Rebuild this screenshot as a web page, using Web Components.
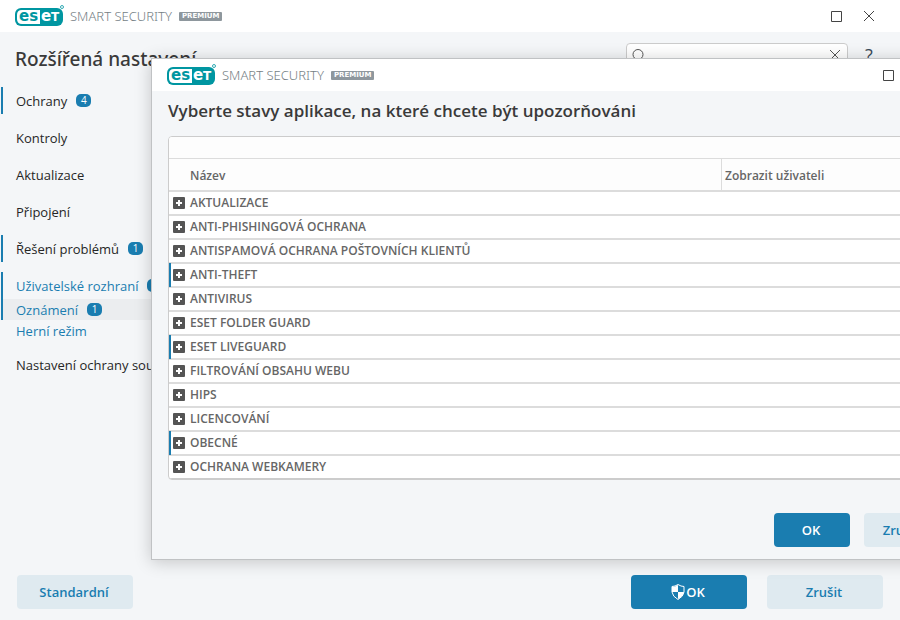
<!DOCTYPE html>
<html lang="cs">
<head>
<meta charset="utf-8">
<title>ESET Smart Security Premium</title>
<style>
    * {
        box-sizing: border-box;
    }
    html {
        --blue: #1a7db0;
        --panel: #f4f6f8;
        --text: #262626;
    }
    body {
        margin: 0;
        min-height: 100vh;
        overflow: hidden;
        background: var(--panel);
        color: var(--text);
        font: 500 13px/20px "Open Sans", "Noto Sans", sans-serif;
    }
</style>
</head>
<body>
<settings-app></settings-app>

<script>
const makeTemplate = (html) => {
    const template = document.createElement('template');
    template.innerHTML = html;
    return template;
};

class BaseElement extends HTMLElement {
    constructor() {
        super();
        this.attachShadow({ mode: 'open' });
        this.shadowRoot.appendChild(this.constructor.template.content.cloneNode(true));
    }
}

class ProductLogo extends BaseElement {
    static template = makeTemplate(`
<style>
    :host {
        display: flex;
        align-items: center;
        color: #747e84;
    }
    svg {
        display: block;
        width: 50px;
        height: 22px;
    }
    .name {
        margin-left: 5px;
        font: 300 13px/20px "Noto Sans", sans-serif;
    }
    .edition {
        margin: 1px 0 0 7px;
        padding: 0 3px;
        border-radius: 1px;
        background: #8e979d;
        color: white;
        font: bold 7px/9px "DejaVu Sans", sans-serif;
    }
</style>
<svg viewBox="0 0 50 22">
    <rect x="0" y="3" width="48" height="18" rx="6" fill="#0096a1"/>
    <path d="M7 5H25V19H7Q2 19 2 14V10Q2 5 7 5Z" fill="white"/>
    <g font-family="DejaVu Sans, sans-serif" font-weight="bold" font-size="15">
        <text x="4" y="16" fill="#0096a1">es</text>
        <text x="26" y="16" fill="white">e</text>
        <text x="36" y="16" fill="white" font-size="12">T</text>
    </g>
    <circle cx="47" cy="2" r="1.5" fill="none" stroke="#0096a1" stroke-width=".8"/>
</svg>
<span class="name">SMART SECURITY</span>
<span class="edition">PREMIUM</span>
`);
}

class TitleBar extends BaseElement {
    static template = makeTemplate(`
<style>
    :host {
        display: flex;
        align-items: center;
        justify-content: space-between;
        height: 32px;
        padding: 0 15px;
        background: white;
    }
    .buttons {
        display: flex;
    }
    button {
        display: grid;
        place-items: center;
        width: 32px;
        height: 32px;
        padding: 0;
        border: 0;
        background: none;
    }
    svg {
        width: 12px;
        height: 12px;
        fill: none;
        stroke: #444;
    }
</style>
<product-logo></product-logo>
<div class="buttons">
    <button aria-label="Maximalizovat"><svg viewBox="0 0 12 12"><path d="M.5 1.5H10.5V11.5H.5Z"/></svg></button>
    <button aria-label="Zavřít"><svg viewBox="0 0 12 12"><path d="M1 1L11 11M11 1L1 11"/></svg></button>
</div>
`);
}

class CountBadge extends BaseElement {
    static template = makeTemplate(`
<style>
    :host {
        display: block;
        width: 15px;
        border-radius: 5px;
        background: var(--blue);
        color: white;
        font-size: 10px;
        line-height: 13px;
        text-align: center;
    }
</style>
<slot></slot>
`);
}

class NavItem extends BaseElement {
    static template = makeTemplate(`
<style>
    :host {
        display: block;
        margin-left: 1px;
        border-left: 2px solid transparent;
    }
    :host([marked]) {
        border-color: var(--blue);
    }
    :host([active]) {
        background: #ebedef;
    }
    :host([accent]) {
        --item-color: var(--blue);
    }
    a {
        display: flex;
        align-items: center;
        gap: 9px;
        height: 27px;
        padding-left: 13px;
        color: var(--item-color, var(--text));
        text-decoration: none;
        white-space: nowrap;
    }
    :host([sub]) a {
        height: 21px;
    }
</style>
<a href="#"><slot></slot><slot name="badge"></slot></a>
`);
}

class UiButton extends BaseElement {
    static template = makeTemplate(`
<style>
    :host {
        display: block;
        width: 116px;
    }
    :host([small]) {
        width: 76px;
    }
    button {
        display: flex;
        align-items: center;
        justify-content: center;
        width: 100%;
        height: 34px;
        padding: 0 2px 0 0;
        border: 0;
        border-radius: 4px;
        background: #dfeaf0;
        color: var(--blue);
        font: inherit;
        font-weight: 600;
    }
    :host([primary]) button {
        background: var(--blue);
        color: white;
    }
</style>
<button><slot></slot></button>
`);
}

class StateTable extends BaseElement {
    static template = makeTemplate(`
<style>
    :host {
        display: block;
        overflow: hidden;
        border: 1px solid #ccc;
        border-radius: 4px;
        background: white;
        color: #666;
    }
    .toolbar {
        height: 21px;
        border-bottom: 1px solid #dcdcdc;
        background: #fdfdfd;
    }
    table {
        width: 100%;
        border-collapse: separate;
        border-spacing: 0;
        table-layout: fixed;
        font: 600 12px/16px "Open Sans", "Noto Sans", sans-serif;
    }
    .shown {
        width: 218px;
    }
    th, td {
        box-sizing: border-box;
        padding: 0;
        text-align: left;
        font-weight: inherit;
    }
    thead th {
        height: 32px;
        padding-top: 2px;
        border-bottom: 1px solid #dcdcdc;
        background: #fdfdfd;
    }
    thead th:first-child {
        padding-left: 21px;
    }
    thead .shown {
        padding-left: 3px;
        border-left: 1px solid #dcdcdc;
    }
    tbody th, tbody td {
        position: relative;
        height: 24px;
        border: solid #dcdcdc;
        border-width: 1px 0;
    }
    tbody tr:last-child > * {
        border-bottom-color: #ccc;
    }
    .marked th::before {
        content: "";
        position: absolute;
        inset: -1px auto -1px 0;
        width: 2px;
        background: var(--blue);
    }
    .name {
        display: flex;
        align-items: center;
        gap: 5px;
        padding-left: 4px;
    }
    button {
        width: 12px;
        height: 12px;
        padding: 0;
        border: 0;
        border-radius: 1px;
        background: #555;
    }
    svg {
        display: block;
        width: 12px;
        height: 12px;
        stroke: white;
        stroke-width: 2;
    }
</style>
<div class="toolbar"></div>
<table>
    <thead>
        <tr><th>Název</th><th class="shown">Zobrazit uživateli</th></tr>
    </thead>
    <tbody></tbody>
</table>
`);

    constructor() {
        super();
        this.rows = [
            ['AKTUALIZACE'],
            ['ANTI-PHISHINGOVÁ OCHRANA'],
            ['ANTISPAMOVÁ OCHRANA POŠTOVNÍCH KLIENTŮ'],
            ['ANTI-THEFT', true],
            ['ANTIVIRUS'],
            ['ESET FOLDER GUARD'],
            ['ESET LIVEGUARD', true],
            ['FILTROVÁNÍ OBSAHU WEBU'],
            ['HIPS'],
            ['LICENCOVÁNÍ'],
            ['OBECNÉ', true],
            ['OCHRANA WEBKAMERY']
        ];
    }

    connectedCallback() {
        const body = this.shadowRoot.querySelector('tbody');
        body.innerHTML = this.rows.map(([name, marked]) => `
            <tr class="${marked ? 'marked' : ''}">
                <th scope="row"><div class="name">
                    <button aria-label="Rozbalit ${name}"><svg viewBox="0 0 12 12"><path d="M3 6H9M6 3V9"/></svg></button>
                    <span>${name}</span>
                </div></th>
                <td></td>
            </tr>`).join('');
    }
}

class StatusDialog extends BaseElement {
    static template = makeTemplate(`
<style>
    :host {
        display: block;
        border: 1px solid #c0c2c4;
        background: var(--panel);
        box-shadow: 0 2px 16px rgba(0, 0, 0, .2);
    }
    main {
        padding: 0 12px 12px 16px;
    }
    h2 {
        margin: 0;
        padding: 8px 0 13px;
        color: #3a3a3a;
        font-size: 17px;
        line-height: 24px;
        font-weight: 600;
    }
    footer {
        display: flex;
        justify-content: flex-end;
        gap: 14px;
        margin-top: 33px;
    }
</style>
<title-bar></title-bar>
<main>
    <h2>Vyberte stavy aplikace, na které chcete být upozorňováni</h2>
    <state-table></state-table>
    <footer>
        <ui-button small primary>OK</ui-button>
        <ui-button small>Zrušit</ui-button>
    </footer>
</main>
`);
}

class SettingsApp extends BaseElement {
    static template = makeTemplate(`
<style>
    :host {
        display: flex;
        flex-direction: column;
        position: relative;
        min-height: 100vh;
        overflow: hidden;
    }
    header {
        display: flex;
        justify-content: space-between;
        padding: 11px 24px 12px 15px;
    }
    h1 {
        margin: 0;
        color: #3a3a3a;
        font: 500 19px/32px "Noto Sans", sans-serif;
    }
    .tools {
        display: flex;
        gap: 14px;
        height: 24px;
    }
    .search {
        display: flex;
        align-items: center;
        width: 222px;
        padding: 0 6px 0 5px;
        box-sizing: border-box;
        border: 1px solid #ccc;
        border-radius: 4px;
        background: white;
    }
    input {
        flex: 1;
        min-width: 0;
        border: 0;
        outline: 0;
        background: none;
        font: inherit;
    }
    button {
        padding: 0;
        border: 0;
        background: none;
        color: #3b4a59;
    }
    .help {
        width: 14px;
        font: 18px/24px "Open Sans", sans-serif;
    }
    svg {
        display: block;
        fill: none;
        stroke: #555;
    }
    nav {
        display: flex;
        flex-direction: column;
        gap: 10px;
        flex: 1;
        width: 240px;
    }
    .actions {
        display: flex;
        gap: 20px;
        padding: 0 17px 11px;
    }
    .actions > :first-child {
        margin-right: auto;
    }
    .shield {
        width: 14px;
        height: 16px;
        margin-right: 1px;
        stroke: none;
    }
    status-dialog {
        position: absolute;
        top: 58px;
        left: 151px;
        right: -53px;
    }
</style>
<title-bar></title-bar>
<header>
    <h1>Rozšířená nastavení</h1>
    <div class="tools">
        <div class="search">
            <svg width="14" height="14" viewBox="0 0 14 14"><circle cx="6" cy="6.5" r="5"/><path d="M9.5 10L13 13.5"/></svg>
            <input type="text" aria-label="Hledat">
            <button aria-label="Vymazat"><svg width="12" height="12" viewBox="0 0 12 12"><path d="M1 1L11 11M11 1L1 11"/></svg></button>
        </div>
        <button class="help">?</button>
    </div>
</header>
<nav>
    <nav-item marked>Ochrany<count-badge slot="badge">4</count-badge></nav-item>
    <nav-item>Kontroly</nav-item>
    <nav-item>Aktualizace</nav-item>
    <nav-item>Připojení</nav-item>
    <nav-item marked>Řešení problémů<count-badge slot="badge">1</count-badge></nav-item>
    <div>
        <nav-item marked accent>Uživatelské rozhraní<count-badge slot="badge">2</count-badge></nav-item>
        <nav-item sub marked active accent>Oznámení<count-badge slot="badge">1</count-badge></nav-item>
        <nav-item sub accent>Herní režim</nav-item>
    </div>
    <nav-item>Nastavení ochrany soukromí</nav-item>
</nav>
<div class="actions">
    <ui-button>Standardní</ui-button>
    <ui-button primary><svg class="shield" viewBox="0 0 14 16"><path d="M7 .5Q4 2.5 1 2.5V8Q1.5 12.5 7 15.5Q12.5 12.5 13 8V2.5Q10 2.5 7 .5Z" fill="none" stroke="white"/><path d="M7 1V8H1V3Q4 3 7 1ZM7 8H13Q12.5 12 7 15Z" fill="white"/></svg>OK</ui-button>
    <ui-button>Zrušit</ui-button>
</div>
<status-dialog></status-dialog>
`);
}

window.customElements.define('product-logo', ProductLogo);
window.customElements.define('title-bar', TitleBar);
window.customElements.define('count-badge', CountBadge);
window.customElements.define('nav-item', NavItem);
window.customElements.define('ui-button', UiButton);
window.customElements.define('state-table', StateTable);
window.customElements.define('status-dialog', StatusDialog);
window.customElements.define('settings-app', SettingsApp);
</script>
</body>
</html>
